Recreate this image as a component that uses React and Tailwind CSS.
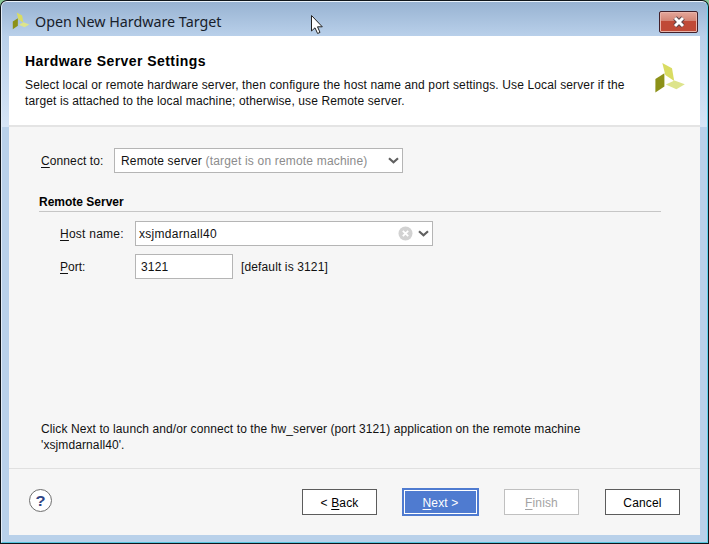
function Mnemonic({ children }) {
  return <span className="underline decoration-1 underline-offset-[2px]">{children}</span>;
}

function Logo({ className }) {
  return (
    <svg className={className} viewBox="0 0 32 32">
      <path d="M8.3 1 L18 6.3 L20.2 19 L11.3 13 Z" fill="#d9dc62" />
      <path d="M1.4 17 L10.4 11.3 L10.4 24.6 L1.4 30.6 Z" fill="#8c9118" />
      <path d="M11.8 22.6 L20.5 18.4 L30.8 22.3 L22.4 27.2 Z" fill="#dde48c" />
    </svg>
  );
}

function Chevron() {
  return (
    <svg className="h-[7px] w-[11px] shrink-0" viewBox="0 0 11 7" fill="none">
      <path d="M1 1.2 L5.5 5.2 L10 1.2" stroke="#606060" strokeWidth="2.2" />
    </svg>
  );
}

function Button({ className, children }) {
  return (
    <button className={"flex items-center justify-center border pt-px tracking-[0.15px] " + className}>
      <span className="block h-[14px] leading-[14px] whitespace-nowrap">{children}</span>
    </button>
  );
}

export default function App() {
  return (
    <div className="h-[544px] w-[709px] overflow-hidden bg-[#86c796] font-['Liberation_Sans',Arial,sans-serif] text-[12px] text-[#111]">
      <div className="h-[544px] w-[709px] rounded-t-[7px] bg-[#10161b] p-px">
        <div className="flex h-[542px] w-[707px] flex-col rounded-t-[6px] border border-t-[#eaf3fb] border-r-[#62d3ec] border-b-[#55c4de] border-l-[#e3edf8] bg-[#b9d1ea] px-[7px]">
          <header className="-mx-[7px] flex h-[34px] shrink-0 items-start rounded-t-[5px] bg-linear-to-b from-[#98b3d2] to-[#b9d0ea] pl-[10px]">
            <Logo className="mt-[10px] h-[18px] w-[18px]" />
            <h1 className="mt-[10px] ml-[5px] w-[560px] font-['Noto_Sans','Open_Sans',sans-serif] text-[14.3px] leading-[20px] whitespace-nowrap text-[#17202b]">
              Open New Hardware Target
            </h1>
            <button className="mt-[9px] ml-[64px] flex h-[22px] w-[39px] items-center justify-center rounded-[2px] border border-[#42202a] bg-linear-to-b from-[#e4a79b] from-0% via-[#d38474] via-45% to-[#c9705c] to-100% shadow-[inset_0_0_0_1px_#e9b4aa,inset_0_-11px_0_0_#c04a37]">
              <svg className="h-[12px] w-[14px]" viewBox="0 0 14 12">
                <path d="M3 2 L11 10 M11 2 L3 10" stroke="#5d4449" strokeWidth="5" />
                <path d="M3 2 L11 10 M11 2 L3 10" stroke="#fff" strokeWidth="3" />
              </svg>
            </button>
          </header>

          <main className="-mx-[7px] flex h-[499px] shrink-0 flex-col">
            <section className="h-[91px] shrink-0 bg-linear-to-b from-[#b9d0ea] to-[#d6e5f6] px-[7px]">
              <div className="flex h-[91px] border-b-2 border-[#e4e4e4] bg-white pl-[16px]">
                <div className="w-[629px] shrink-0 pt-[16px]">
                  <h2 className="text-[14px] leading-[18px] font-bold tracking-[0.44px] whitespace-nowrap text-black">Hardware Server Settings</h2>
                  <p className="mt-[7px] leading-[16px] tracking-[0.125px] whitespace-nowrap">
                    <span className="block">Select local or remote hardware server, then configure the host name and port settings. Use Local server if the</span>
                    <span className="block">target is attached to the local machine; otherwise, use Remote server.</span>
                  </p>
                </div>
                <Logo className="mt-[26px] h-[32px] w-[32px]" />
              </div>
            </section>

            <section className="mx-[7px] h-[341px] shrink-0 bg-[#f6f6f6] pt-[21px]">
              <div className="flex h-[25px] items-center pl-[32px]">
                <label className="w-[73px] tracking-[0.1px] whitespace-nowrap"><Mnemonic>C</Mnemonic>onnect to:</label>
                <div className="flex h-[25px] w-[289px] items-center border border-[#b5b5b5] bg-white pr-[3px] pl-[6px]">
                  <span className="flex-1 tracking-[0.18px] whitespace-nowrap">
                    Remote server <span className="text-[#8c8c8c]">(target is on remote machine)</span>
                  </span>
                  <Chevron />
                </div>
              </div>
              <h3 className="mt-[22px] ml-[30px] h-[17px] w-[622px] border-b border-[#c6c6c6] leading-[14px] font-bold whitespace-nowrap text-black">
                Remote Server
              </h3>
              <div className="mt-[9px] flex h-[25px] items-center pl-[51px]">
                <label className="w-[75px] tracking-[0.25px] whitespace-nowrap"><Mnemonic>H</Mnemonic>ost name:</label>
                <div className="flex h-[25px] w-[298px] items-center border border-[#b5b5b5] bg-white pr-[3px] pl-[3px]">
                  <span className="flex-1 tracking-[0.3px]">xsjmdarnall40</span>
                  <svg className="mr-[5px] h-[15px] w-[15px]" viewBox="0 0 15 15">
                    <circle cx="7.5" cy="7.5" r="7" fill="#d2d2d2" />
                    <path d="M4.8 4.8 L10.2 10.2 M10.2 4.8 L4.8 10.2" stroke="#fff" strokeWidth="1.8" />
                  </svg>
                  <Chevron />
                </div>
              </div>
              <div className="mt-[8px] flex h-[25px] items-center pl-[51px]">
                <label className="w-[75px] whitespace-nowrap"><Mnemonic>P</Mnemonic>ort:</label>
                <div className="flex h-[25px] w-[98px] items-center border border-[#b5b5b5] bg-white pl-[5px] tracking-[0.15px]">3121</div>
                <span className="ml-[8px] tracking-[0.13px]">[default is 3121]</span>
              </div>
              <p className="mt-[142px] ml-[32px] leading-[16px] tracking-[0.1px] whitespace-nowrap">
                <span className="block">Click Next to launch and/or connect to the hw_server (port 3121) application on the remote machine</span>
                <span className="block">'xsjmdarnall40'.</span>
              </p>
            </section>

            <footer className="mx-[7px] flex h-[67px] shrink-0 items-center border-t border-[#e0e0e0] bg-[#f6f6f6] pl-[20px]">
              <button className="-mt-[3px] flex h-[23px] w-[23px] items-center justify-center rounded-full border border-[#6e6e6e] bg-white pt-px text-[15px] font-bold text-[#2f4585]">
                <span className="block scale-x-110">?</span>
              </button>
              <Button className="ml-[250px] h-[26px] w-[75px] border-[#5c5c5c] bg-white text-black">&lt; <Mnemonic>B</Mnemonic>ack</Button>
              <div className="ml-[25px] bg-[#4f7bd0] p-[2px]">
                <Button className="h-[24px] w-[73px] border-white bg-[#4f7bd0] text-white"><Mnemonic>N</Mnemonic>ext &gt;</Button>
              </div>
              <Button className="ml-[25px] h-[26px] w-[75px] border-[#c0c0c0] bg-white text-[#a3a3a3]"><Mnemonic>F</Mnemonic>inish</Button>
              <Button className="ml-[26px] h-[26px] w-[75px] border-[#5c5c5c] bg-white text-black">Cancel</Button>
            </footer>
          </main>
        </div>
      </div>
      <svg className="absolute top-[14px] left-[310px] h-[21px] w-[14px]" viewBox="0 0 14 21">
        <path d="M1.5 1.5 V17 L5 13.8 L7.6 19.5 L10 18.4 L7.5 12.8 H12.3 Z" fill="#fff" stroke="#222" strokeWidth="1" />
      </svg>
    </div>
  );
}
